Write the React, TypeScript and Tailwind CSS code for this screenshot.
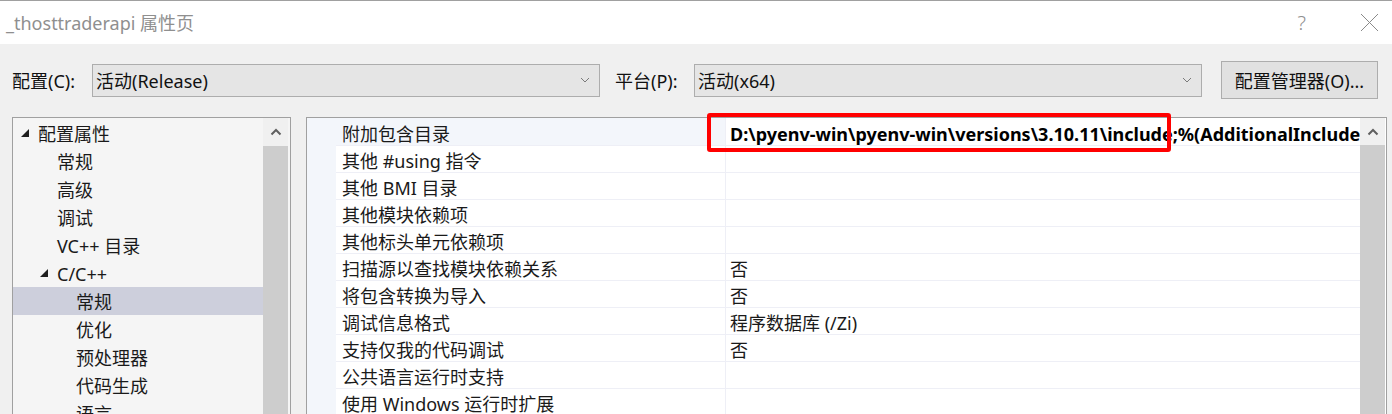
import React from "react";

const font = { fontFamily: '"Noto Sans", "Noto Sans CJK SC", sans-serif' };

const treeRows: { label: string; level: number; open?: boolean; selected?: boolean }[] = [
  { label: "配置属性", level: 0, open: true },
  { label: "常规", level: 1 },
  { label: "高级", level: 1 },
  { label: "调试", level: 1 },
  { label: "VC++ 目录", level: 1 },
  { label: "C/C++", level: 1, open: true },
  { label: "常规", level: 2, selected: true },
  { label: "优化", level: 2 },
  { label: "预处理器", level: 2 },
  { label: "代码生成", level: 2 },
  { label: "语言", level: 2 },
];

const props: { name: string; value?: string; bold?: boolean }[] = [
  { name: "附加包含目录", value: "D:\\pyenv-win\\pyenv-win\\versions\\3.10.11\\include;%(AdditionalIncludeDirectories)", bold: true },
  { name: "其他 #using 指令" },
  { name: "其他 BMI 目录" },
  { name: "其他模块依赖项" },
  { name: "其他标头单元依赖项" },
  { name: "扫描源以查找模块依赖关系", value: "否" },
  { name: "将包含转换为导入", value: "否" },
  { name: "调试信息格式", value: "程序数据库 (/Zi)" },
  { name: "支持仅我的代码调试", value: "否" },
  { name: "公共语言运行时支持" },
  { name: "使用 Windows 运行时扩展" },
];

const Chevron = () => (
  <svg width="10" height="6" viewBox="0 0 10 6" className="shrink-0">
    <path d="M1 1 L5 5 L9 1" fill="none" stroke="#7a7a7a" strokeWidth="1" />
  </svg>
);

const UpArrow = () => (
  <svg width="12" height="8" viewBox="0 0 12 8">
    <path d="M1.5 6.5 L6 2 L10.5 6.5" fill="none" stroke="#606060" strokeWidth="2" />
  </svg>
);

const Expander = () => (
  <svg width="8" height="8" viewBox="0 0 8 8" className="shrink-0">
    <polygon points="8,0 8,8 0,8" fill="#1e1e1e" />
  </svg>
);

const Combo = ({ text, w }: { text: string; w: string }) => (
  <div className={`${w} h-[33px] bg-[#e5e5e5] border border-[#adadad] flex items-center pl-[3px] pr-[9px]`}>
    <span className="flex-1 text-[18px] text-[#111] pt-[2px]">{text}</span>
    <Chevron />
  </div>
);

const indent = ["w-[8px]", "w-[27px]", "w-[46px]"];

export default function App() {
  return (
    <div style={font} className="relative w-[1392px] h-[414px] overflow-hidden bg-[#f0f0f0] flex flex-col">
      {/* title bar */}
      <div className="h-[44px] bg-white border-t border-[#a0a0a0] flex items-center pl-[6px] shrink-0">
        <span className="text-[18px] text-[#8f8f8f] flex-1 pt-[2px]">_thosttraderapi 属性页</span>
        <span className="text-[20px] text-[#8f8f8f] mr-[54px] font-light">?</span>
        <svg width="19" height="19" viewBox="0 0 19 19" className="mr-[13px]">
          <path d="M1 1 L18 18 M18 1 L1 18" stroke="#8a8a8a" strokeWidth="1" />
        </svg>
      </div>

      {/* config row */}
      <div className="flex items-center h-[38px] mt-[17px] shrink-0">
        <span className="ml-[12px] w-[80px] text-[18px] text-[#111] pt-[2px]">配置(C):</span>
        <Combo text="活动(Release)" w="w-[508px]" />
        <span className="ml-[15px] w-[79px] text-[18px] text-[#111] pt-[2px]">平台(P):</span>
        <Combo text="活动(x64)" w="w-[508px]" />
        <div className="ml-[19px] w-[157px] h-[38px] bg-[#e1e1e1] border border-[#adadad] flex items-center justify-center text-[18px] text-[#111] pt-[2px]">
          配置管理器(O)...
        </div>
      </div>

      {/* panels */}
      <div className="flex mt-[18px] flex-1 min-h-0">
        {/* tree */}
        <div className="ml-[12px] w-[279px] border-l border-t border-r border-[#a0a0a0] bg-[#f5f5f5] flex">
          <div className="flex-1 pt-[1px]">
            {treeRows.map((r, i) => (
              <div
                key={i}
                className={`h-[28px] flex items-center text-[18px] text-[#1a1a1a] ${r.selected ? "bg-[#cdcfdc]" : ""}`}
              >
                <div className={`${indent[r.level]} shrink-0`} />
                <div className="w-[17px] flex items-center shrink-0">{r.open && <Expander />}</div>
                <span className="pt-[2px]">{r.label}</span>
              </div>
            ))}
          </div>
          <div className="w-[25px] mr-[2px] flex flex-col">
            <div className="h-[28px] flex items-center justify-center bg-[#f0f0f0]">
              <UpArrow />
            </div>
            <div className="flex-1 bg-[#cdcdcd]" />
          </div>
        </div>

        {/* property grid */}
        <div className="ml-[15px] w-[1081px] border-l border-t border-r border-[#a0a0a0] bg-white flex">
          <div className="w-[29px] bg-[#f3f6fb] shrink-0" />
          <div className="flex-1 min-w-0">
            {props.map((p, i) => (
              <div
                key={i}
                className={`${i === 0 ? "h-[28px] bg-[#f3f6fb]" : "h-[27px]"} flex border-b border-[#eeeff6]`}
              >
                <div className="w-[390px] shrink-0 pl-[6px] pt-[5px] flex items-center text-[18px] text-[#1a1a1a] border-r border-[#eeeff6]">
                  {p.name}
                </div>
                <div
                  className={`flex-1 min-w-0 overflow-hidden whitespace-nowrap pl-[4px] pt-[5px] flex items-center text-[18px] text-[#1a1a1a] ${p.bold ? "font-bold text-black bg-white" : ""}`}
                >
                  {p.value}
                </div>
              </div>
            ))}
          </div>
          <div className="w-[25px] mr-[1px] flex flex-col shrink-0">
            <div className="h-[27px] flex items-center justify-center bg-[#f0f0f0]">
              <UpArrow />
            </div>
            <div className="flex-1 bg-[#cdcdcd]" />
          </div>
        </div>
      </div>

      {/* red annotation box */}
      <div className="absolute left-[707px] top-[113px] w-[464px] h-[39px] border-[4px] border-[#ff0000] rounded-[3px]" />
    </div>
  );
}
